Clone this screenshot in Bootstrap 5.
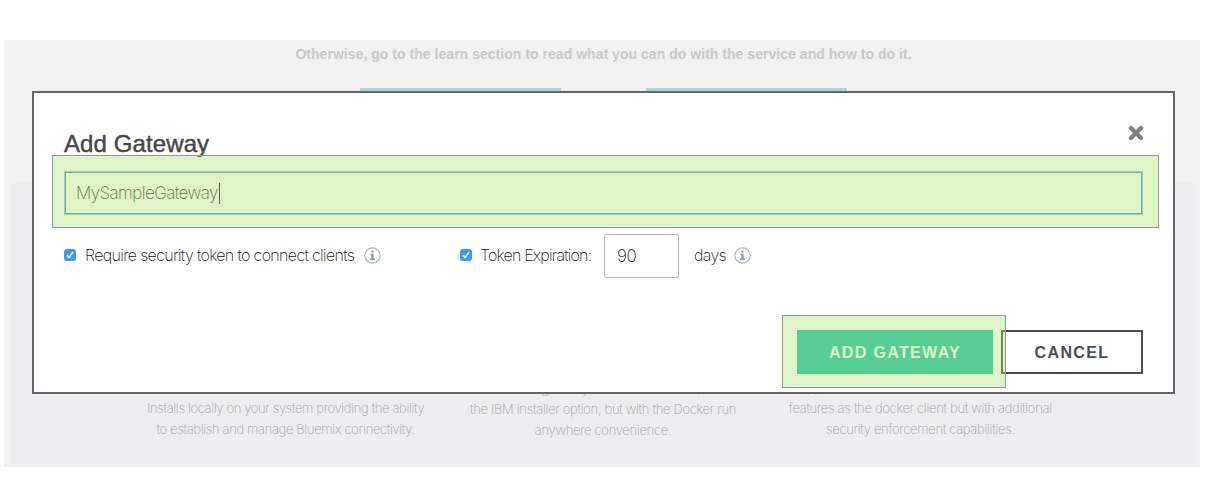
<!DOCTYPE html>
<html lang="en">
<head>
<meta charset="utf-8">
<meta name="viewport" content="width=device-width, initial-scale=1">
<title>Add Gateway</title>
<link href="https://cdn.jsdelivr.net/npm/bootstrap@5.3.0/dist/css/bootstrap.min.css" rel="stylesheet">
<style>
body{background:#fff;font-family:"Liberation Sans",sans-serif;overflow:hidden}
.stage{width:1196px;height:427px;margin:40px 0 0 4px;background:#f1f1f1;padding:0 4px 3px 7px}
.intro{height:48px;padding-top:4px;font-size:14px;line-height:20px;letter-spacing:.035px;color:#c6c9c8;margin-left:-7px;width:1199px}
.tabs{height:3px;gap:85px;margin-left:349px}
.tab-bar{width:201px;background:#a3dad5}
.panel{margin-top:92px;height:281px;background:#ecedef;padding:194px 117px 0 116px}
.blurb{font:200 13px/21px Inter,sans-serif;letter-spacing:-.31px;color:#a3a5a6;white-space:nowrap;flex:1 1 0}
.blurb-installer{letter-spacing:-.36px}
.blurb-docker{padding-top:1px}
.blurb div{height:21px}
.dialog-box{left:32px;top:91px;width:1143px;height:303px;background:#fff;border:2px solid #646469;padding:0 30px}
.dialog-head{height:78px;padding-top:28px}
.dialog-head h1{font-size:24px;line-height:44px;color:#464649;margin:0;letter-spacing:.1px;-webkit-text-stroke:.45px #464649;padding-top:1px}
.close-x{width:16px;height:16px;margin:4px -1px 0 0;background:none}
.name-input{height:44px;border:1px solid #a7b7bc;box-shadow:inset 0 0 0 1px #358edf;padding:0 11px;font:200 17px Inter,sans-serif;letter-spacing:-.58px;color:#1c1c1c}
.caret{width:1px;height:21px;background:#111;margin-left:1px}
.options{height:44px;margin-top:19px;font:200 16px Inter,sans-serif;color:#111;white-space:nowrap}
.options > :not(.days-input){margin-bottom:2px}
.check{width:12px;height:12px;border-radius:3px;background:#3b99fc}
.days-input{width:75px;height:44px;border:1px solid #b5b5bf;border-radius:2px;padding:0 0 1px 12px;font-size:17px;letter-spacing:-.5px}
.opt-require{width:278px;margin-left:9px;letter-spacing:-.65px}
.second{margin-left:80px}
.opt-expire{width:124px;margin-left:8px;letter-spacing:-.8px}
.opt-days{width:39px;margin-left:15px;letter-spacing:-.65px}
.info{margin-left:1px;margin-right:-1px}
.actions{margin-top:52px;gap:8px}
.actions .btn{height:44px;border-radius:0;font-weight:700;font-size:16px;letter-spacing:1.35px;padding:0;line-height:42px}
.btn-add,.btn-add:hover{width:196px;background:#1ebead;color:#fff;border:0}
.actions .btn-add{padding-top:2px}
.btn-stop{width:142px;color:#4c4c54;border:2px solid #4c4c54;background:#fff}
.marker{background:rgba(172,227,112,.4);border:1px solid #959892;background-clip:padding-box;pointer-events:none}
.marker-name{left:52px;top:155px;width:1107px;height:73px}
.marker-add{left:782px;top:315px;width:224px;height:73px}
</style>
</head>
<body>
<main class="stage">
  <div class="intro text-center fw-bold">Otherwise, go to the learn section to read what you can do with the service and how to do it.</div>
  <div class="tabs d-flex"><div class="tab-bar"></div><div class="tab-bar"></div></div>
  <section class="panel d-flex text-center">
    <div class="blurb blurb-installer"><div></div><div>Installs locally on your system providing the ability</div><div>to establish and manage Bluemix connectivity.</div></div>
    <div class="blurb blurb-docker"><div>Provides gateway functions similar to, as</div><div>the IBM installer option, but with the Docker run</div><div>anywhere convenience.</div></div>
    <div class="blurb"><div>Appliance, with all of the same robust client</div><div>features as the docker client but with additional</div><div>security enforcement capabilities.</div></div>
  </section>
</main>

<div class="dialog-box position-absolute" role="dialog" aria-label="Add Gateway">
  <div class="dialog-head d-flex justify-content-between">
    <h1>Add Gateway</h1>
    <button type="button" class="close-x border-0 p-0 d-flex" aria-label="Close">
      <svg width="16" height="16" viewBox="0 0 16 16"><path d="M3 3l10 10M13 3L3 13" stroke="#808080" stroke-width="4.3" stroke-linecap="round"/></svg>
    </button>
  </div>
  <div class="name-input d-flex align-items-center"><span>MySampleGateway</span><span class="caret"></span></div>
  <div class="options d-flex align-items-center">
    <span class="check d-flex"><svg width="12" height="12" viewBox="0 0 12 12"><path d="M3 6.3l2 2.2L9 3.3" fill="none" stroke="#fff" stroke-width="1.6"/></svg></span>
    <span class="opt-require">Require security token to connect clients</span>
    <svg class="info" width="17" height="17" viewBox="0 0 17 17"><circle cx="8.5" cy="8.5" r="7.7" fill="none" stroke="#a9b5bd" stroke-width="1.2"/><path d="M7.3 3.6h2.3v2H7.3zM6.1 6.8h3.6v4.8h1.3v1.3H6v-1.3h1.2V8.1H6.1z" fill="#8f9da6"/></svg>
    <span class="check d-flex second"><svg width="12" height="12" viewBox="0 0 12 12"><path d="M3 6.3l2 2.2L9 3.3" fill="none" stroke="#fff" stroke-width="1.6"/></svg></span>
    <span class="opt-expire">Token Expiration:</span>
    <span class="days-input d-flex align-items-center">90</span>
    <span class="opt-days">days</span>
    <svg class="info" width="17" height="17" viewBox="0 0 17 17"><circle cx="8.5" cy="8.5" r="7.7" fill="none" stroke="#a9b5bd" stroke-width="1.2"/><path d="M7.3 3.6h2.3v2H7.3zM6.1 6.8h3.6v4.8h1.3v1.3H6v-1.3h1.2V8.1H6.1z" fill="#8f9da6"/></svg>
  </div>
  <div class="actions d-flex justify-content-end">
    <button type="button" class="btn btn-add">ADD GATEWAY</button>
    <button type="button" class="btn btn-stop">CANCEL</button>
  </div>
</div>
<div class="marker marker-name position-absolute"></div>
<div class="marker marker-add position-absolute"></div>
<script src="https://cdn.jsdelivr.net/npm/bootstrap@5.3.0/dist/js/bootstrap.bundle.min.js"></script>
</body>
</html>
